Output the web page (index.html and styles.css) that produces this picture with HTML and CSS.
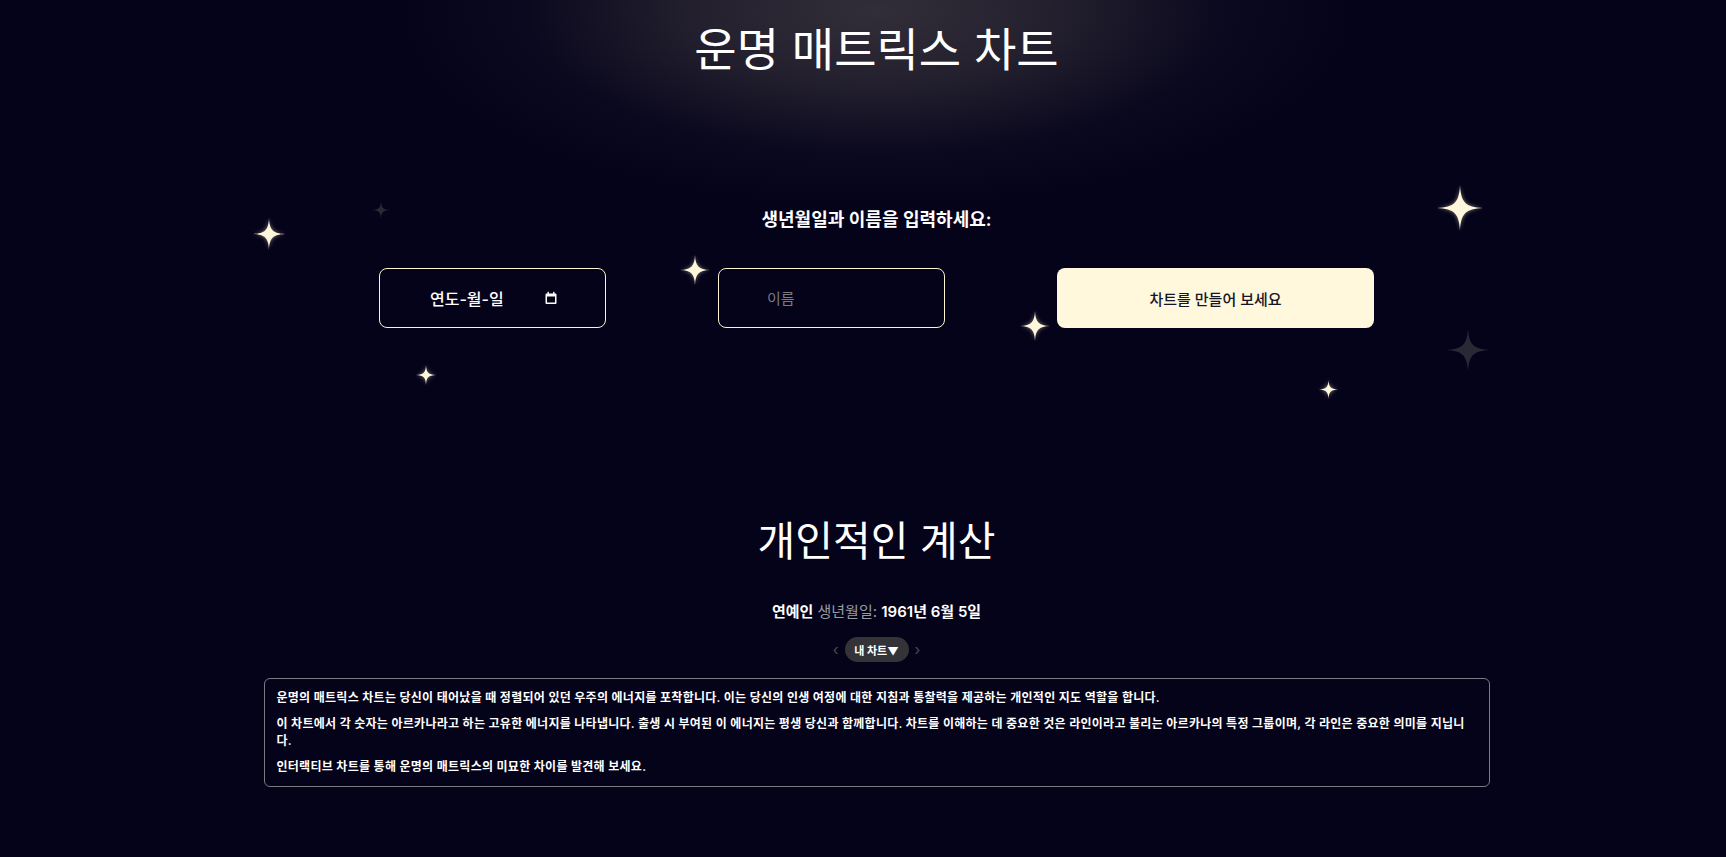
FILE: index.html
```html
<!DOCTYPE html>
<html lang="ko">
<head>
<meta charset="utf-8">
<title>운명 매트릭스 차트</title>
<link rel="stylesheet" href="styles.css">
</head>
<body>
<svg class="defs" width="0" height="0" aria-hidden="true">
  <defs>
    <symbol id="sparkle" viewBox="0 0 100 100">
      <path d="M50 0 C52 38 62 48 100 50 C62 52 52 62 50 100 C48 62 38 52 0 50 C38 48 48 38 50 0Z"/>
    </symbol>
  </defs>
</svg>
<div class="glow"></div>
<div class="stars" aria-hidden="true">
  <svg class="star bright" style="left:253px;top:218px;width:32px;height:32px"><use href="#sparkle"/></svg>
  <svg class="star dim" style="left:372px;top:201px;width:18px;height:18px"><use href="#sparkle"/></svg>
  <svg class="star bright" style="left:416px;top:365px;width:20px;height:20px"><use href="#sparkle"/></svg>
  <svg class="star bright" style="left:680px;top:255px;width:30px;height:30px"><use href="#sparkle"/></svg>
  <svg class="star bright" style="left:1020px;top:311px;width:30px;height:30px"><use href="#sparkle"/></svg>
  <svg class="star bright" style="left:1437px;top:185px;width:46px;height:46px"><use href="#sparkle"/></svg>
  <svg class="star dim" style="left:1446px;top:328px;width:44px;height:44px"><use href="#sparkle"/></svg>
  <svg class="star bright" style="left:1319px;top:380px;width:19px;height:19px"><use href="#sparkle"/></svg>
</div>
<div class="page">
  <header class="hero">
    <h1 class="hero-title">운명 매트릭스 차트</h1>
  </header>
  <section class="form-section">
    <p class="prompt">생년월일과 이름을 입력하세요:</p>
    <form class="form-row">
      <label class="field date-field">
        <span class="date-text">연도-월-일</span>
        <svg class="cal-icon" viewBox="0 0 12 14" width="12" height="14"><path d="M1.5 2.5h9a1 1 0 0 1 1 1v8.5a1 1 0 0 1-1 1h-9a1 1 0 0 1-1-1V3.5a1 1 0 0 1 1-1z M2 5.5v6h8v-6z" fill="#fff" fill-rule="evenodd"/><rect x="2.5" y="0.8" width="1.4" height="2.5" fill="#fff"/><rect x="8.1" y="0.8" width="1.4" height="2.5" fill="#fff"/></svg>
      </label>
      <input class="field name-field" type="text" placeholder="이름">
      <button class="submit" type="button">차트를 만들어 보세요</button>
    </form>
  </section>
  <section class="calc">
    <h2 class="calc-title">개인적인 계산</h2>
    <p class="person"><b>연예인</b> <span class="muted">생년월일:</span> <b>1961년 6월 5일</b></p>
    <div class="chart-switch">
      <span class="chev">‹</span>
      <span class="pill">내 차트▼</span>
      <span class="chev">›</span>
    </div>
    <div class="info-box">
      <p>운명의 매트릭스 차트는 당신이 태어났을 때 정렬되어 있던 우주의 에너지를 포착합니다. 이는 당신의 인생 여정에 대한 지침과 통찰력을 제공하는 개인적인 지도 역할을 합니다.</p>
      <p>이 차트에서 각 숫자는 아르카나라고 하는 고유한 에너지를 나타냅니다. 출생 시 부여된 이 에너지는 평생 당신과 함께합니다. 차트를 이해하는 데 중요한 것은 라인이라고 불리는 아르카나의 특정 그룹이며, 각 라인은 중요한 의미를 지닙니다.</p>
      <p>인터랙티브 차트를 통해 운명의 매트릭스의 미묘한 차이를 발견해 보세요.</p>
    </div>
  </section>
</div>
</body>
</html>
```
FILE: styles.css
```css
* { box-sizing: border-box; }
html, body { margin: 0; padding: 0; }
body {
  background: #05031a;
  color: #fff;
  font-family: "Inter", "Noto Sans CJK KR", sans-serif;
  min-height: 857px;
  position: relative;
  overflow: hidden;
}
.defs { position: absolute; width: 0; height: 0; }
.glow {
  position: absolute;
  left: 386px;
  top: -190px;
  width: 980px;
  height: 400px;
  background: radial-gradient(ellipse closest-side at 50% 50%, rgba(52,48,58,0.95) 0%, rgba(44,40,52,0.8) 35%, rgba(22,19,38,0.35) 72%, rgba(5,3,26,0) 100%);
  pointer-events: none;
}
.stars { position: absolute; left: 0; top: 0; width: 100%; height: 100%; pointer-events: none; }
.star { position: absolute; }
.star.bright { fill: #fff7dc; filter: drop-shadow(0 0 2px rgba(255,247,220,0.5)); }
.star.dim { fill: #2a2835; }

.page {
  position: relative;
  padding-left: 27px;
  display: flex;
  flex-direction: column;
  align-items: center;
}
.hero { padding-top: 18px; height: 208px; }
.hero-title {
  margin: 0;
  font-family: "Noto Sans CJK KR", sans-serif;
  font-weight: 400;
  font-size: 46px;
  line-height: 56px;
  letter-spacing: 0;
  color: #fff;
}
.form-section { display: flex; flex-direction: column; align-items: center; }
.prompt {
  margin: 0;
  font-size: 18px;
  line-height: 24px;
  font-weight: 600;
}
.form-row {
  margin-top: 36px;
  display: flex;
  gap: 112px;
  align-items: center;
}
.field {
  width: 227px;
  height: 60px;
  border: 1px solid #fff3d0;
  border-radius: 8px;
  background: transparent;
  color: #fff;
  font-family: "Inter", "Noto Sans CJK KR", sans-serif;
}
.date-field {
  display: flex;
  align-items: center;
  justify-content: space-between;
  padding: 0 48px 0 50px;
  font-size: 16px;
  font-weight: 500;
}
.cal-icon { display: block; }
.name-field {
  padding: 0 0 0 48px;
  font-size: 15px;
  outline: none;
}
.name-field::placeholder { color: #7a7a80; }
.submit {
  width: 317px;
  height: 60px;
  border: 0;
  border-radius: 8px;
  background: #fff8dc;
  color: #16152a;
  font-family: "Inter", "Noto Sans CJK KR", sans-serif;
  font-size: 15px;
  font-weight: 500;
}
.calc { margin-top: 186px; display: flex; flex-direction: column; align-items: center; }
.calc-title {
  margin: 0;
  font-family: "Noto Sans CJK KR", sans-serif;
  font-weight: 400;
  font-size: 41px;
  line-height: 48px;
}
.person {
  margin: 40px 0 0;
  font-size: 15px;
  line-height: 20px;
}
.person b { font-weight: 600; }
.muted { color: #9a9aa0; }
.chart-switch {
  margin-top: 15px;
  display: flex;
  align-items: center;
  gap: 6px;
}
.chev { color: #4a4a55; font-size: 15px; line-height: 25px; }
.pill {
  width: 64px;
  height: 25px;
  border-radius: 13px;
  background: #333338;
  font-size: 11px;
  font-weight: 700;
  display: flex;
  align-items: center;
  justify-content: center;
}
.info-box {
  margin-top: 16px;
  width: 1226px;
  border: 1px solid #7a7a80;
  border-radius: 6px;
  padding: 10px 12px 11px;
  font-size: 12px;
  line-height: 17px;
  font-weight: 600;
  letter-spacing: 0.27px;
}
.info-box p { margin: 0 0 9px; }
.info-box p:last-child { margin-bottom: 0; }
```
